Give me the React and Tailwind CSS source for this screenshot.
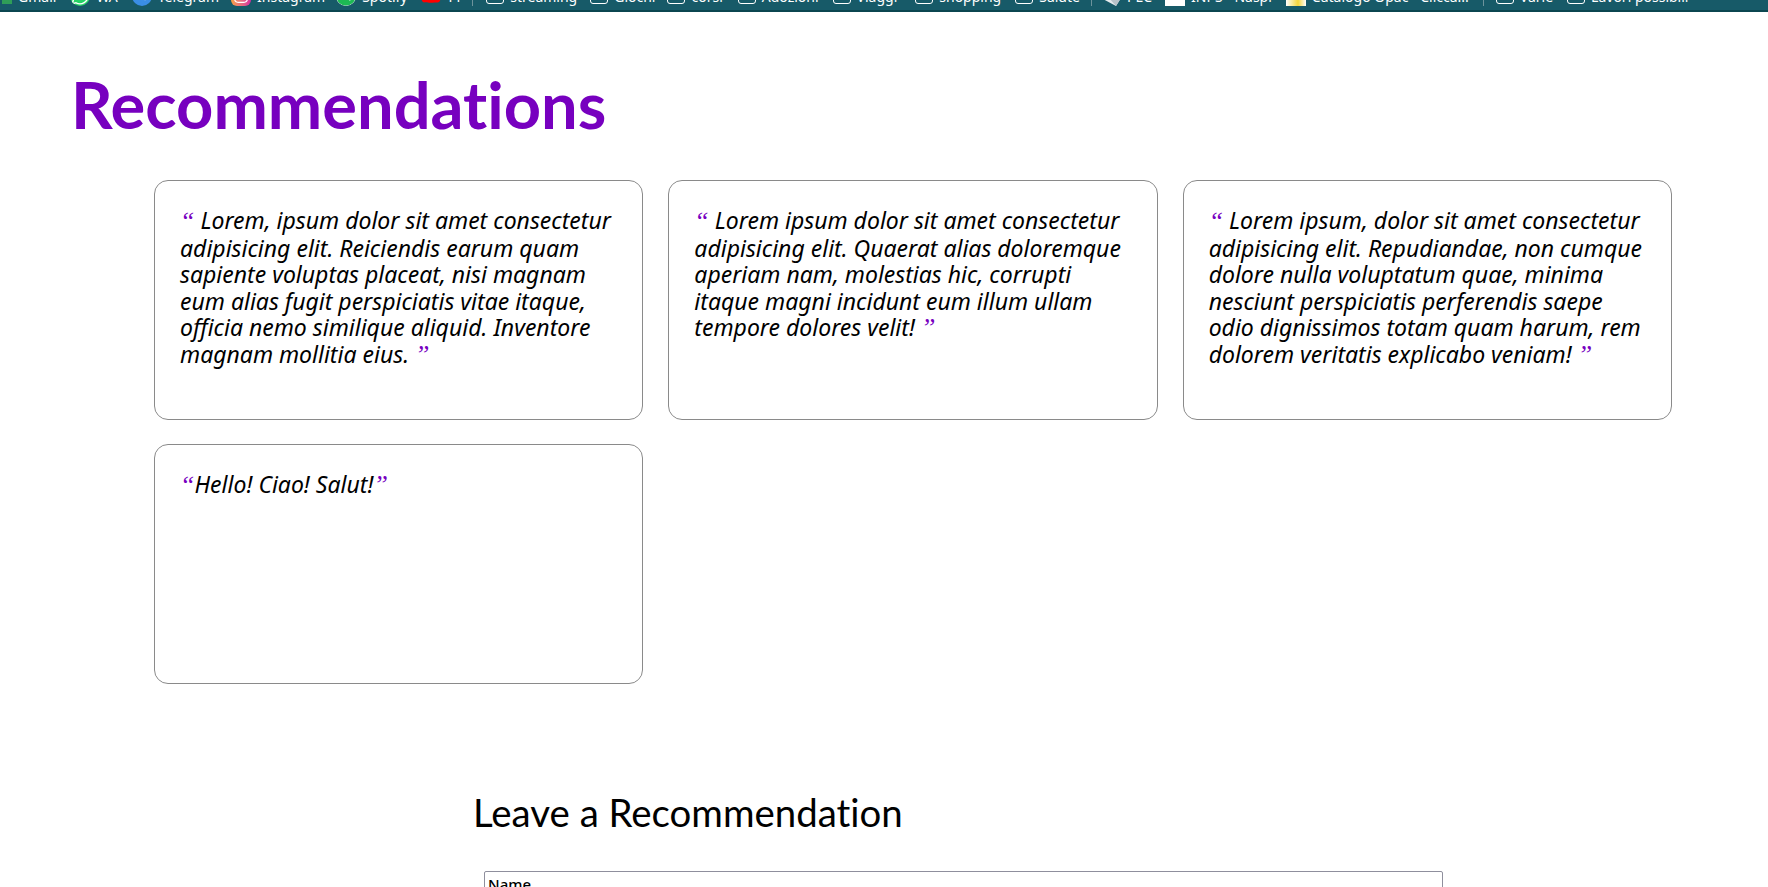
import { FaWhatsapp, FaTelegramPlane, FaInstagram, FaSpotify, FaYoutube } from 'react-icons/fa';

const Bookmark = ({ icon, label, className = 'mr-[14px]' }) => (
  <span className={`flex items-center gap-[6px] whitespace-nowrap ${className}`}>
    {icon}
    <span>{label}</span>
  </span>
);

const Folder = () => (
  <span className="block h-[16px] w-[18px] rounded-[3px] border-[1.5px] border-white" />
);

const Divider = ({ className = 'mr-[13px]' }) => <span className={`block h-5 w-px bg-[#6d939c] ${className}`} />;

const PecIcon = () => (
  <svg viewBox="0 0 20 20" className="h-5 w-5">
    <polygon points="0,12 20,12 15,20" fill="#e6ebee" />
    <polygon points="8,12 20,12 15,20" fill="#b8c2c9" />
  </svg>
);

const folders = [
  { label: 'streaming', className: 'mr-[13px]' },
  { label: 'Giochi', className: 'mr-[12px]' },
  { label: 'corsi', className: 'mr-[15px]' },
  { label: 'Adozioni', className: 'mr-[14px]' },
  { label: 'Viaggi', className: 'mr-[18px]' },
  { label: 'shopping', className: 'mr-[14px]' },
  { label: 'Salute', className: 'mr-[11px]' },
];

const recommendations = [
  { text: 'Lorem, ipsum dolor sit amet consectetur adipisicing elit. Reiciendis earum quam sapiente voluptas placeat, nisi magnam eum alias fugit perspiciatis vitae itaque, officia nemo similique aliquid. Inventore magnam mollitia eius.', spaced: true },
  { text: 'Lorem ipsum dolor sit amet consectetur adipisicing elit. Quaerat alias doloremque aperiam nam, molestias hic, corrupti itaque magni incidunt eum illum ullam tempore dolores velit!', spaced: true },
  { text: 'Lorem ipsum, dolor sit amet consectetur adipisicing elit. Repudiandae, non cumque dolore nulla voluptatum quae, minima nesciunt perspiciatis perferendis saepe odio dignissimos totam quam harum, rem dolorem veritatis explicabo veniam!', spaced: true },
  { text: 'Hello! Ciao! Salut!', spaced: false },
];

const Quote = ({ char }) => <span className="font-['Liberation_Serif',serif] text-[26px] text-[#7700bf]">{char}</span>;

const App = () => {
  return (
    <div className="h-[887px] overflow-hidden bg-white font-['Noto_Sans',sans-serif] text-black">
      <div className="h-[12px] overflow-hidden border-b-2 border-[#0b4650] bg-[#175a68] text-[14px] text-white">
        <div className="-mt-[14px] flex h-5 items-center pl-[2px]">
          <Bookmark icon={<span className="block h-4 w-[10px] bg-[#2f9e58]" />} label="Gmail" />
          <Bookmark icon={<FaWhatsapp className="h-5 w-5 rounded-full bg-[#25d366]" />} label="WA" />
          <Bookmark className="mr-[12px]" icon={<span className="flex h-5 w-5 items-center justify-center rounded-full bg-[#3a8ee6]"><FaTelegramPlane className="h-3 w-3" /></span>} label="Telegram" />
          <Bookmark className="mr-[11px]" icon={<span className="flex h-5 w-5 items-center justify-center rounded-md bg-gradient-to-r from-[#f9a03c] to-[#d6249f]"><FaInstagram className="h-4 w-4" /></span>} label="Instagram" />
          <Bookmark className="mr-[13px]" icon={<FaSpotify className="h-5 w-5 rounded-full bg-white text-[#1db954]" />} label="Spotify" />
          <Bookmark className="mr-[10px]" icon={<FaYoutube className="h-5 w-5 text-[#ff0000]" />} label="YT" />
          <Divider />
          {folders.map((f) => <Bookmark key={f.label} className={f.className} icon={<Folder />} label={f.label} />)}
          <Divider className="mr-[9px]" />
          <Bookmark className="mr-[13px]" icon={<PecIcon />} label="PEC" />
          <Bookmark icon={<span className="block h-5 w-5 bg-[linear-gradient(#4a86c8_70%,#ffffff_71%)]" />} label="INPS - Naspi" />
          <Bookmark icon={<span className="block h-5 w-5 bg-[linear-gradient(90deg,#ffffff,#f4d63a_60%,#ffffff)]" />} label="Catalogo Opac - Clicca..." />
          <Divider className="mr-[12px]" />
          <Bookmark icon={<Folder />} label="Varie" />
          <Bookmark icon={<Folder />} label="Lavori possibili" />
        </div>
      </div>

      <div className="pl-[72px] pr-[96px]">
        <h1 className="-ml-[1px] mt-[54px] font-['Lato',sans-serif] text-[65px] font-bold leading-[77px] text-[#7700bf] [font-variant-ligatures:none]">Recommendations</h1>

        <div className="ml-[82px] mt-[37px] grid grid-cols-3 gap-x-[25px] gap-y-[24px]">
          {recommendations.map((r, i) => (
            <div key={i} className="h-[240px] rounded-[14px] border border-[#8a8a8a] px-[25px] pt-[26px] text-[23px] italic leading-[26.5px]">
              <Quote char="“" />{r.spaced ? ' ' : ''}{r.text}{r.spaced ? ' ' : ''}<Quote char="”" />
            </div>
          ))}
        </div>
      </div>

      <div className="ml-[473px] mt-[107px]">
        <h2 className="font-['Lato',sans-serif] text-[38.4px] leading-[43px] [font-variant-ligatures:none]">Leave a Recommendation</h2>
        <input
          placeholder="Name"
          className="ml-[11px] mt-[37px] box-border h-8 w-[959px] rounded-[2px] border border-[#8f8f9d] px-[3px] pb-[6px] text-[15px] font-medium placeholder:text-black"
        />
      </div>
    </div>
  );
};

export default App;
